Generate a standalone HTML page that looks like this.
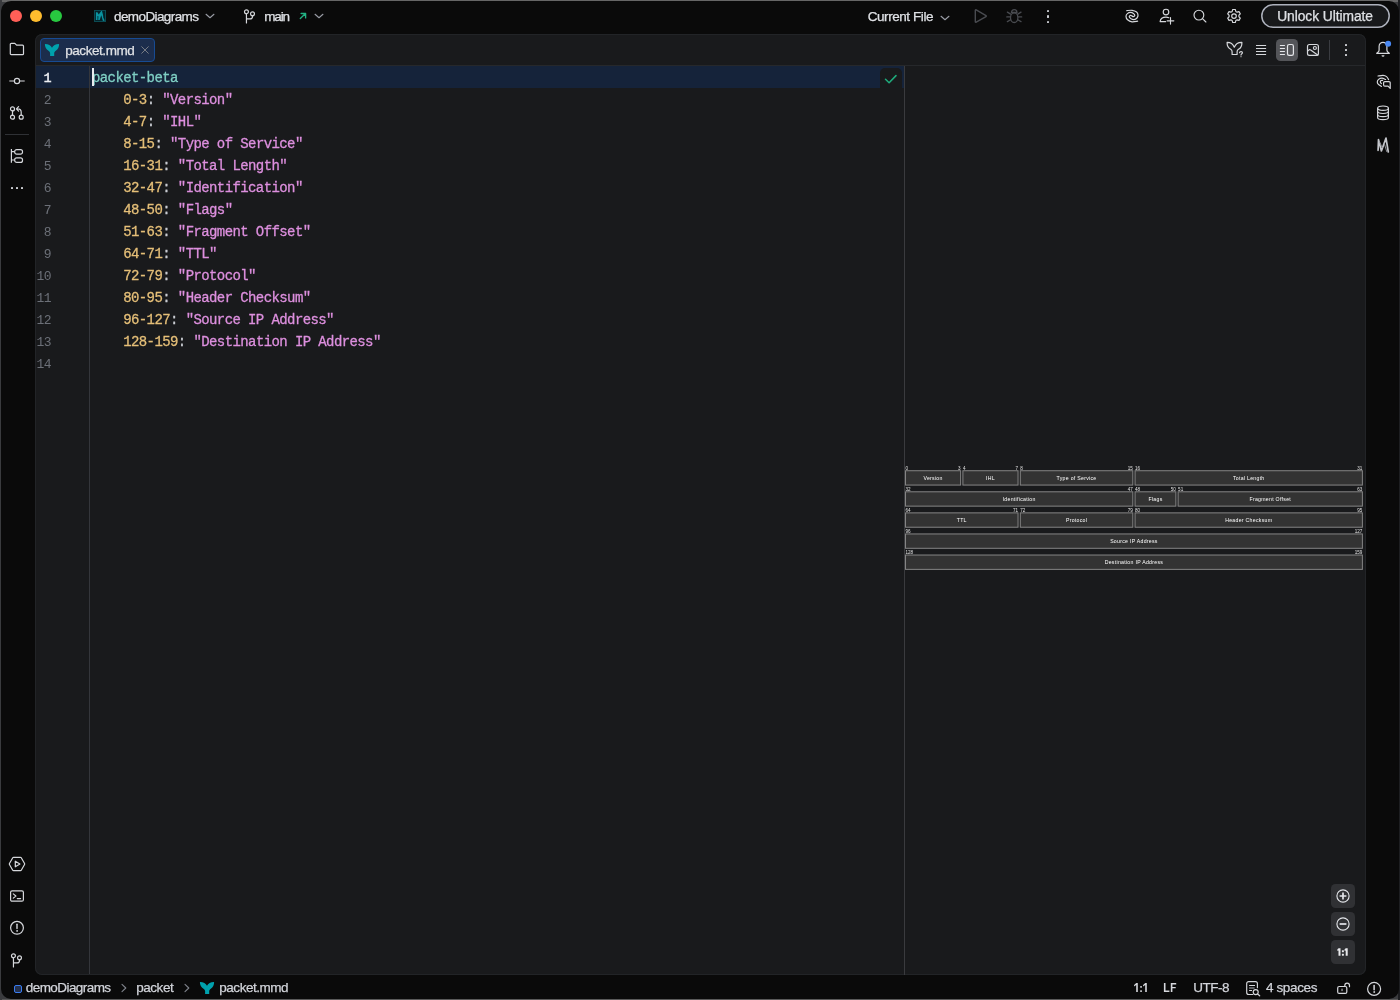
<!DOCTYPE html>
<html>
<head>
<meta charset="utf-8">
<title>packet.mmd</title>
<style>
*{box-sizing:border-box;margin:0;padding:0}
html,body{width:1400px;height:1000px;overflow:hidden;background:#3a3b3e;font-family:"Liberation Sans",sans-serif;}
#win{position:absolute;left:1px;top:1px;width:1398.4px;height:998px;background:#0a0a0a;border-radius:10px;overflow:hidden;}
#pg{will-change:transform;position:absolute;left:-1px;top:-1px;width:1400px;height:1000px;}
.abs{position:absolute}
.t{position:absolute;color:#dfe1e5;white-space:nowrap;font-family:"Liberation Sans",sans-serif;-webkit-text-stroke:0.25px currentColor;}
svg{position:absolute;overflow:visible}
.ic{fill:none;stroke:#d6d8dc;stroke-width:1.2;stroke-linecap:round;stroke-linejoin:round}
.dim{stroke:#54575e}
#island{position:absolute;left:35px;top:34px;width:1331px;height:941px;background:#191a1c;border-radius:7px;box-shadow:inset 0 0 0 1px #222427;}
.code{position:absolute;font-family:"Liberation Mono",monospace;font-size:14px;letter-spacing:-0.6px;line-height:22px;white-space:pre;color:#d5d8de;-webkit-text-stroke:0.3px currentColor;}
.ln{position:absolute;font-family:"Liberation Mono",monospace;font-size:13px;letter-spacing:-0.6px;line-height:22px;color:#6c7078;text-align:right;white-space:pre;}
.k{color:#7fcfc4}.n{color:#e5bf78}.s{color:#dd8fde}.p{color:#c9ccd2}
</style>
</head>
<body>
<div class="abs" style="left:0;top:0;width:1400px;height:1.5px;background:#666"></div><div class="abs" style="left:0;top:998.5px;width:1400px;height:1.5px;background:#5a5a5a"></div><div class="abs" style="left:1398px;top:0;width:2px;height:1000px;background:#1d1e21"></div><div class="abs" style="left:0;top:0;width:1.5px;height:1000px;background:#3a3b3e"></div>
<div id="win"><div id="pg">
<!-- traffic lights -->
<div class="abs" style="left:9.8px;top:9.5px;width:12.4px;height:12.4px;border-radius:50%;background:#ff5f57"></div>
<div class="abs" style="left:29.8px;top:9.5px;width:12.4px;height:12.4px;border-radius:50%;background:#febc2e"></div>
<div class="abs" style="left:49.8px;top:9.5px;width:12.4px;height:12.4px;border-radius:50%;background:#28c840"></div>

<!-- TITLE BAR -->
<svg style="left:94px;top:10px" width="12" height="12" viewBox="0 0 12 12"><rect x="0.5" y="0.5" width="11" height="11" fill="#04232a" stroke="#0b4a52" stroke-width="1"/><path d="M1.900 2.200h1.500l1.300 2.300L7.200 1.100h.8l2.600 9.800-1.800-.1L7.300 5.300 5.700 10H4.200l.2-3.800-.9-.3V10H1.900z" fill="#0a93a0"/><path d="M9.800 1v7.400" stroke="#04232a" stroke-width=".8"/></svg>
<div class="t" style="left:114.00px;top:7.32px;font-size:13.5px;line-height:20px;color:#dfe1e5;font-weight:normal;letter-spacing:-0.595px;">demoDiagrams</div>
<svg style="left:205px;top:11px" width="10" height="10" viewBox="0 0 10 10"><path style="stroke:#9a9da6;stroke-width:1.100" class="ic" d="M1.050 3.250 5 6.750 8.950 3.250"/></svg>
<svg style="left:241px;top:8px" width="16" height="16" viewBox="0 0 16 16"><g class="ic"><circle cx="5.450" cy="3.800" r="1.950"/><circle cx="11.500" cy="5.850" r="1.950"/><path d="M5.450 5.800V15M11.500 7.800v.6a2.500 2.500 0 0 1-2.500 2.500H5.450"/></g></svg>
<div class="t" style="left:264.20px;top:7.32px;font-size:13.5px;line-height:20px;color:#dfe1e5;font-weight:normal;letter-spacing:-1.122px;">main</div>
<svg style="left:298px;top:11px" width="10" height="10" viewBox="0 0 10 10"><path d="M2.300 7.600 7.500 2.600M3.100 2.500H7.600V6.900" fill="none" stroke="#22b183" stroke-width="1.350" stroke-linecap="round" stroke-linejoin="round"/></svg>
<svg style="left:314px;top:11px" width="10" height="10" viewBox="0 0 10 10"><path style="stroke:#9a9da6;stroke-width:1.100" class="ic" d="M1.050 3.250 5 6.750 8.950 3.250"/></svg>

<div class="t" style="left:867.70px;top:7.32px;font-size:13.5px;line-height:20px;color:#dfe1e5;font-weight:normal;letter-spacing:-0.430px;">Current File</div>
<svg style="left:940px;top:12.950px" width="10" height="10" viewBox="0 0 10 10"><path style="stroke:#9a9da6;stroke-width:1.100" class="ic" d="M1.050 3.250 5 6.750 8.950 3.250"/></svg>
<svg style="left:972px;top:8px" width="16" height="16" viewBox="0 0 16 16"><path d="M3.300 2.400v11.300a.6.600 0 0 0 .9.520l9.800-5.650a.6.600 0 0 0 0-1.040l-9.800-5.650a.6.600 0 0 0-.9.520z" fill="none" stroke="#494b50" stroke-width="1.400" stroke-linejoin="round"/></svg>
<svg style="left:1006px;top:8px" width="16" height="16" viewBox="0 0 16 16"><g fill="none" stroke="#494b50" stroke-width="1.300" stroke-linecap="round"><ellipse cx="8.200" cy="9.700" rx="3.700" ry="4.800"/><path d="M5.400 4.500a2.800 2.900 0 0 1 5.600 0z" stroke-linejoin="round"/><path d="M.8 8.900h3.400M12.400 8.900h3.300M1.400 4.100 4.600 6.100M15 4.100 11.800 6.100M1.400 13.600 4.600 11.800M15 13.600 11.800 11.800"/></g></svg>
<div class="abs" style="left:1046.800px;top:9.500px;width:2.500px;height:2.500px;border-radius:35%;background:#ced0d6"></div>
<div class="abs" style="left:1046.800px;top:15.100px;width:2.500px;height:2.500px;border-radius:35%;background:#ced0d6"></div>
<div class="abs" style="left:1046.800px;top:20.700px;width:2.500px;height:2.500px;border-radius:35%;background:#ced0d6"></div>

<!-- swirl -->
<svg style="left:1124px;top:8px" width="16" height="16" viewBox="0 0 16 16"><g style="stroke-width:1.2" class="ic"><path d="M2.80 2.60C3.67 2.55 6.37 2.07 8.00 2.30C9.63 2.53 11.60 3.22 12.60 4.00C13.60 4.78 13.93 6.00 14.00 7.00C14.07 8.00 13.67 9.23 13.00 10.00C12.33 10.77 11.07 11.53 10.00 11.60C8.93 11.67 7.40 10.90 6.60 10.40C5.80 9.90 5.20 9.10 5.20 8.60C5.20 8.10 6.13 7.53 6.60 7.40C7.07 7.27 7.77 7.73 8.00 7.80"/><path d="M13.60 13.20C12.67 13.30 9.67 14.03 8.00 13.80C6.33 13.57 4.60 12.70 3.60 11.80C2.60 10.90 2.03 9.43 2.00 8.40C1.97 7.37 2.63 6.27 3.40 5.60C4.17 4.93 5.60 4.43 6.60 4.40C7.60 4.37 8.70 4.90 9.40 5.40C10.10 5.90 10.80 6.87 10.80 7.40C10.80 7.93 9.83 8.45 9.40 8.60C8.97 8.75 8.40 8.35 8.20 8.30"/></g></svg>
<!-- add user -->
<svg style="left:1158px;top:8px" width="18" height="18" viewBox="0 0 18 18"><g style="stroke-width:1.15" class="ic"><circle cx="8" cy="4" r="2.8"/><path d="M2.100 13.600c.3-2.700 2.700-4.500 5.900-4.500 1 0 2 .2 2.800.6M2.100 13.600h5.600M12.500 9.500v6.600M9.200 12.800h6.600"/></g></svg>
<!-- search -->
<svg style="left:1192px;top:8px" width="16" height="16" viewBox="0 0 16 16"><g style="stroke-width:1.15" class="ic"><circle cx="6.900" cy="7.100" r="4.900"/><path d="M10.500 10.700 13.900 14"/></g></svg>
<!-- gear -->
<svg style="left:1226px;top:8px" width="16" height="16" viewBox="0 0 16 16"><g style="stroke-width:1.15" class="ic"><circle cx="8" cy="8.100" r="2.300"/><path d="M6.700 1.500h2.600l.5 1.900 1.300.75 1.900-.55 1.300 2.250-1.400 1.400v1.500l1.400 1.400-1.300 2.250-1.900-.55-1.300.75-.5 1.900H6.700l-.5-1.900-1.300-.75-1.900.55-1.300-2.250 1.400-1.400v-1.500l-1.400-1.400 1.300-2.250 1.900.55 1.300-.75z" stroke-linejoin="round"/></g></svg>

<svg style="left:1261px;top:4px" width="129" height="24" viewBox="0 0 129 24"><rect x=".8" y=".8" width="127.400" height="22.400" rx="11.200" fill="#18191b" stroke="#adb1bc" stroke-width="1.500"/></svg>
<div class="t" style="left:1277.20px;top:7.02px;font-size:13.8px;line-height:20px;color:#dfe1e5;font-weight:normal;letter-spacing:-0.058px;">Unlock Ultimate</div>

<!-- LEFT BAR -->
<svg style="left:9px;top:41px" width="16" height="16" viewBox="0 0 16 16"><path class="ic" d="M1.300 3.300a1 1 0 0 1 1-1h3.500l1.800 1.900h5.900a1 1 0 0 1 1 1v7.500a1 1 0 0 1-1 1H2.300a1 1 0 0 1-1-1z"/></svg>
<svg style="left:9px;top:73px" width="16" height="16" viewBox="0 0 16 16"><g class="ic"><circle cx="8" cy="8" r="2.600"/><path d="M.3 8h4.800M10.900 8h4.800" stroke-linecap="butt"/></g></svg>
<svg style="left:9px;top:105px" width="16" height="16" viewBox="0 0 16 16"><g class="ic"><circle cx="3.500" cy="3.900" r="2"/><circle cx="3.500" cy="12.200" r="2"/><circle cx="12.200" cy="12.200" r="2"/><path d="M3.500 5.900v4.300M12.200 10.200V7.300a3.400 3.400 0 0 0-3.400-3.400H7.500M9.600 1.700 7.400 3.900l2.200 2.200"/></g></svg>
<div class="abs" style="left:5px;top:134px;width:24px;height:1px;background:#2f3135"></div>
<svg style="left:9px;top:148px" width="16" height="16" viewBox="0 0 16 16"><g class="ic"><path d="M2.400 1v13.800M2.400 3.700h3.200M2.400 12h3.200" stroke-linecap="butt"/><rect x="5.700" y="1.600" width="7.800" height="4.600" rx="2"/><rect x="5.700" y="9.800" width="7.800" height="4.600" rx="2"/></g></svg>
<div class="abs" style="left:10.800px;top:186.800px;width:2.200px;height:2.200px;border-radius:25%;background:#cdcfd4"></div>
<div class="abs" style="left:15.900px;top:186.800px;width:2.200px;height:2.200px;border-radius:25%;background:#cdcfd4"></div>
<div class="abs" style="left:20.900px;top:186.800px;width:2.200px;height:2.200px;border-radius:25%;background:#cdcfd4"></div>

<svg style="left:9px;top:856px" width="16" height="16" viewBox="0 0 16 16"><g class="ic"><path d="M4.600 1.300h6.800a1 1 0 0 1 .85.500l3.300 5.700a1 1 0 0 1 0 1l-3.300 5.700a1 1 0 0 1-.85.500H4.600a1 1 0 0 1-.85-.5L.45 8.500a1 1 0 0 1 0-1l3.300-5.700a1 1 0 0 1 .85-.5z"/><path d="M6.300 5.200v5.600l4.600-2.800z"/></g></svg>
<svg style="left:9px;top:888px" width="16" height="16" viewBox="0 0 16 16"><g class="ic"><rect x="1.600" y="2.800" width="12.800" height="10.400" rx="1.500"/><path d="M4.300 5.900 6.900 8 4.300 10.100M8.300 10.600h3.300"/></g></svg>
<svg style="left:9px;top:920px" width="16" height="16" viewBox="0 0 16 16"><g class="ic"><circle cx="8" cy="7.800" r="6.400"/><path d="M8 4.300v4.300" stroke-width="1.400"/><circle cx="8" cy="10.900" r=".5" fill="#d6d8dc" stroke-width=".7"/></g></svg>
<svg style="left:7.950px;top:952.400px" width="16" height="16" viewBox="0 0 16 16"><g class="ic"><circle cx="5.450" cy="3.800" r="1.950"/><circle cx="11.500" cy="5.850" r="1.950"/><path d="M5.450 5.800V15M11.500 7.800v.6a2.500 2.500 0 0 1-2.500 2.500H5.450"/></g></svg>

<!-- RIGHT BAR -->
<svg style="left:1375px;top:41px" width="16" height="16" viewBox="0 0 16 16"><g class="ic"><path d="M1.700 12.400H14.300C13.400 11.500 11.900 10.600 11.900 9.200V5.400a3.900 4.100 0 0 0-7.800 0V9.200C4.100 10.600 2.600 11.500 1.700 12.400z"/></g><path d="M6.500 14.300h3a1.500 1.500 0 0 1-3 0z" fill="#d6d8dc"/><circle cx="13.100" cy="2.800" r="3" fill="#4a89f3"/></svg>
<svg style="left:1375px;top:74px" width="17" height="16" viewBox="0 0 17 16"><g class="ic"><path d="M3.00 2.00C3.83 1.88 6.57 1.20 8.00 1.30C9.43 1.40 10.67 1.88 11.60 2.60C12.53 3.32 13.27 5.10 13.60 5.60"/><path d="M10.60 5.50C10.00 5.28 8.17 4.22 7.00 4.20C5.83 4.18 4.38 4.77 3.60 5.40C2.82 6.03 2.33 7.17 2.30 8.00C2.27 8.83 2.72 9.67 3.40 10.40C4.08 11.13 5.90 12.07 6.40 12.40"/><path d="M7.60 6.40C7.33 6.43 6.38 6.33 6.00 6.60C5.62 6.87 5.23 7.50 5.30 8.00C5.37 8.50 6.22 9.33 6.40 9.60"/><path d="M9.800 7.600h4.200a1.200 1.200 0 0 1 1.200 1.200v5.600L13 12.200H9.800a1.200 1.200 0 0 1-1.200-1.200V8.800a1.200 1.200 0 0 1 1.200-1.200z"/></g></svg>
<svg style="left:1375px;top:105px" width="16" height="16" viewBox="0 0 16 16"><g style="stroke-width:1.150" class="ic"><ellipse cx="8" cy="3.200" rx="5.400" ry="2.200"/><path d="M2.600 3.200v9.200c0 1.200 2.400 2.200 5.400 2.200s5.400-1 5.400-2.200V3.200"/><path d="M2.600 6.300c0 1.200 2.400 2.200 5.400 2.200s5.400-1 5.400-2.200M2.600 9.400c0 1.200 2.400 2.200 5.400 2.200s5.400-1 5.400-2.200"/></g></svg>
<svg style="left:1375px;top:137px" width="16" height="16" viewBox="0 0 16 16"><g fill="none" stroke-linejoin="round" stroke-linecap="round"><path d="M3.100 13.300 3.500 2.600 6.400 14 11 1.100 13.300 15" stroke="#c4c6cb" stroke-width="1.700"/><path d="M4.900 5.500 7.100 10.500M9.400 6.800 11.700 14.500" stroke="#8e9096" stroke-width="1"/></g></svg>


<div id="island"></div>
<!-- TAB BAR -->
<div class="abs" style="left:36px;top:65px;width:1329px;height:1px;background:#26282b"></div>
<div class="abs" style="left:40px;top:38px;width:115px;height:24px;border:1px solid #174b93;border-radius:4px;background:#1c2d4c"></div>
<svg style="left:44px;top:43px" width="16" height="14" viewBox="0 0 16 14"><path d="M.9 1C4.200.9 6.900 2.500 8 4.850 9.100 2.500 11.800.9 15.100 1c.1 3-1.100 5.300-3.300 6.800-1 .7-1.600 1.500-1.600 2.500v2.600H6.100v-2.600c0-1-.6-1.800-1.600-2.500C2.200 6.300.8 4 .9 1z" fill="#00a1ad"/></svg>
<div class="t" style="left:65.20px;top:41.32px;font-size:13.5px;line-height:20px;color:#dfe1e5;font-weight:normal;letter-spacing:-0.437px;">packet.mmd</div>
<svg style="left:141px;top:46px" width="8" height="8" viewBox="0 0 8 8"><path d="M.7.700 7.300 7.300M7.300.7.700 7.300" stroke="#787c84" stroke-width="1" fill="none" stroke-linecap="round"/></svg>

<!-- editor toolbar (right) -->
<svg style="left:1226px;top:41px" width="18" height="17" viewBox="0 0 18 17"><path class="ic" d="M1.100 1.400C4.200 1.300 6.900 2.900 8.300 6.200 9.700 2.900 12.400 1.300 15.900 1.400c.1 3-1 5.500-3.400 6.900-.9.500-1.400 1.400-1.400 2.400v2.800H6.100V10.700c0-1-.5-1.900-1.400-2.400C2.300 6.900 1 4.400 1.100 1.400z"/><path d="M13.500 11.700c.1-1.500 3-1.500 3 0 0 1.100-1.500 1.100-1.500 2.400M15 15.600v.2" fill="none" stroke="#d6d8dc" stroke-width="1.100" stroke-linecap="round"/></svg>
<svg style="left:1253px;top:42px" width="16" height="16" viewBox="0 0 16 16"><path style="stroke-linecap:butt;stroke-width:1.200" class="ic" d="M3 3.500h10.100M3 6.500h10.100M3 9.500h10.100M3 12.500h10.100"/></svg>
<div class="abs" style="left:1276px;top:39px;width:22px;height:22px;border-radius:4.500px;background:#545559"></div>
<svg style="left:1279px;top:42px" width="16" height="16" viewBox="0 0 16 16"><g style="stroke:#e6e7ea;stroke-width:1.200" class="ic"><path d="M.9 3.500h5M.9 6.500h5M.9 9.500h5M.9 12.500h5" stroke-linecap="butt"/><rect x="8.500" y="2.500" width="5.900" height="10.900" rx="1.700"/></g></svg>
<svg style="left:1305px;top:42px" width="16" height="16" viewBox="0 0 16 16"><g style="stroke-width:1.200" class="ic"><rect x="2.500" y="2.500" width="10.900" height="10.900" rx="1.900"/><circle cx="9.900" cy="6" r="1.500"/><path d="M2.600 9 4.300 7.700a.8.800 0 0 1 1 0L12.700 13.100"/></g></svg>
<div class="abs" style="left:1329px;top:40px;width:1px;height:20px;background:#3a3c41"></div>
<div class="abs" style="left:1344.700px;top:43.500px;width:2.400px;height:2.400px;border-radius:35%;background:#d6d8dc"></div>
<div class="abs" style="left:1344.700px;top:48.700px;width:2.400px;height:2.400px;border-radius:35%;background:#d6d8dc"></div>
<div class="abs" style="left:1344.700px;top:53.800px;width:2.400px;height:2.400px;border-radius:35%;background:#d6d8dc"></div>

<!-- CODE -->
<div class="abs" style="left:36px;top:66px;width:868px;height:22px;background:#15233a"></div>
<div class="abs" style="left:89px;top:66px;width:1px;height:908px;background:#34363b"></div>
<div class="abs" style="left:904px;top:66px;width:1px;height:908.5px;background:#3a3b3e"></div>
<div class="abs" style="left:880px;top:68px;width:22px;height:22px;border-radius:5px 5px 0 0;background:#191a1c"></div>
<svg style="left:884px;top:73px" width="14" height="12" viewBox="0 0 14 12"><path d="M1.500 6.300 5.100 9.700 12 2.600" fill="none" stroke="#1fab7c" stroke-width="1.550" stroke-linecap="round" stroke-linejoin="round"/></svg>
<div class="ln" style="left:29px;top:68px;width:22px"><span style="color:#eceef2;-webkit-text-stroke:0.5px #eceef2">1</span>
2
3
4
5
6
7
8
9
10
11
12
13
14</div>
<div class="code" style="left:92px;top:67px"><span class="k">packet-beta</span>
    <span class="n">0-3</span><span class="p">:</span> <span class="s">&quot;Version&quot;</span>
    <span class="n">4-7</span><span class="p">:</span> <span class="s">&quot;IHL&quot;</span>
    <span class="n">8-15</span><span class="p">:</span> <span class="s">&quot;Type of Service&quot;</span>
    <span class="n">16-31</span><span class="p">:</span> <span class="s">&quot;Total Length&quot;</span>
    <span class="n">32-47</span><span class="p">:</span> <span class="s">&quot;Identification&quot;</span>
    <span class="n">48-50</span><span class="p">:</span> <span class="s">&quot;Flags&quot;</span>
    <span class="n">51-63</span><span class="p">:</span> <span class="s">&quot;Fragment Offset&quot;</span>
    <span class="n">64-71</span><span class="p">:</span> <span class="s">&quot;TTL&quot;</span>
    <span class="n">72-79</span><span class="p">:</span> <span class="s">&quot;Protocol&quot;</span>
    <span class="n">80-95</span><span class="p">:</span> <span class="s">&quot;Header Checksum&quot;</span>
    <span class="n">96-127</span><span class="p">:</span> <span class="s">&quot;Source IP Address&quot;</span>
    <span class="n">128-159</span><span class="p">:</span> <span class="s">&quot;Destination IP Address&quot;</span></div>
<div class="abs" style="left:92px;top:68px;width:2px;height:18px;background:#e9ebef"></div>

<!-- DIAGRAM -->
<svg style="left:905px;top:463.67px" width="460.06" height="112.10" viewBox="0 0 1026 250" font-family="Liberation Sans, sans-serif" font-size="10.2">
<rect x="1.1" y="15" width="123" height="32" fill="#333333" stroke="#858585" stroke-width="2.23"/>
<text x="62.6" y="34.6" text-anchor="middle" fill="#ffffff" font-size="11.6" letter-spacing="0.62">Version</text>
<text x="1.1" y="12.5" text-anchor="start" fill="#e0e0e0">0</text>
<text x="124.1" y="12.5" text-anchor="end" fill="#e0e0e0">3</text>
<rect x="129.1" y="15" width="123" height="32" fill="#333333" stroke="#858585" stroke-width="2.23"/>
<text x="190.6" y="34.6" text-anchor="middle" fill="#ffffff" font-size="11.6" letter-spacing="0.62">IHL</text>
<text x="129.1" y="12.5" text-anchor="start" fill="#e0e0e0">4</text>
<text x="252.1" y="12.5" text-anchor="end" fill="#e0e0e0">7</text>
<rect x="257.1" y="15" width="251" height="32" fill="#333333" stroke="#858585" stroke-width="2.23"/>
<text x="382.6" y="34.6" text-anchor="middle" fill="#ffffff" font-size="11.6" letter-spacing="0.62">Type of Service</text>
<text x="257.1" y="12.5" text-anchor="start" fill="#e0e0e0">8</text>
<text x="508.1" y="12.5" text-anchor="end" fill="#e0e0e0">15</text>
<rect x="513.1" y="15" width="507" height="32" fill="#333333" stroke="#858585" stroke-width="2.23"/>
<text x="766.6" y="34.6" text-anchor="middle" fill="#ffffff" font-size="11.6" letter-spacing="0.62">Total Length</text>
<text x="513.1" y="12.5" text-anchor="start" fill="#e0e0e0">16</text>
<text x="1020.1" y="12.5" text-anchor="end" fill="#e0e0e0">31</text>
<rect x="1.1" y="62" width="507" height="32" fill="#333333" stroke="#858585" stroke-width="2.23"/>
<text x="254.6" y="81.6" text-anchor="middle" fill="#ffffff" font-size="11.6" letter-spacing="0.62">Identification</text>
<text x="1.1" y="59.5" text-anchor="start" fill="#e0e0e0">32</text>
<text x="508.1" y="59.5" text-anchor="end" fill="#e0e0e0">47</text>
<rect x="513.1" y="62" width="91" height="32" fill="#333333" stroke="#858585" stroke-width="2.23"/>
<text x="558.6" y="81.6" text-anchor="middle" fill="#ffffff" font-size="11.6" letter-spacing="0.62">Flags</text>
<text x="513.1" y="59.5" text-anchor="start" fill="#e0e0e0">48</text>
<text x="604.1" y="59.5" text-anchor="end" fill="#e0e0e0">50</text>
<rect x="609.1" y="62" width="411" height="32" fill="#333333" stroke="#858585" stroke-width="2.23"/>
<text x="814.6" y="81.6" text-anchor="middle" fill="#ffffff" font-size="11.6" letter-spacing="0.62">Fragment Offset</text>
<text x="609.1" y="59.5" text-anchor="start" fill="#e0e0e0">51</text>
<text x="1020.1" y="59.5" text-anchor="end" fill="#e0e0e0">63</text>
<rect x="1.1" y="109" width="251" height="32" fill="#333333" stroke="#858585" stroke-width="2.23"/>
<text x="126.6" y="128.6" text-anchor="middle" fill="#ffffff" font-size="11.6" letter-spacing="0.62">TTL</text>
<text x="1.1" y="106.5" text-anchor="start" fill="#e0e0e0">64</text>
<text x="252.1" y="106.5" text-anchor="end" fill="#e0e0e0">71</text>
<rect x="257.1" y="109" width="251" height="32" fill="#333333" stroke="#858585" stroke-width="2.23"/>
<text x="382.6" y="128.6" text-anchor="middle" fill="#ffffff" font-size="11.6" letter-spacing="0.62">Protocol</text>
<text x="257.1" y="106.5" text-anchor="start" fill="#e0e0e0">72</text>
<text x="508.1" y="106.5" text-anchor="end" fill="#e0e0e0">79</text>
<rect x="513.1" y="109" width="507" height="32" fill="#333333" stroke="#858585" stroke-width="2.23"/>
<text x="766.6" y="128.6" text-anchor="middle" fill="#ffffff" font-size="11.6" letter-spacing="0.62">Header Checksum</text>
<text x="513.1" y="106.5" text-anchor="start" fill="#e0e0e0">80</text>
<text x="1020.1" y="106.5" text-anchor="end" fill="#e0e0e0">95</text>
<rect x="1.1" y="156" width="1019" height="32" fill="#333333" stroke="#858585" stroke-width="2.23"/>
<text x="510.6" y="175.6" text-anchor="middle" fill="#ffffff" font-size="11.6" letter-spacing="0.62">Source IP Address</text>
<text x="1.1" y="153.5" text-anchor="start" fill="#e0e0e0">96</text>
<text x="1020.1" y="153.5" text-anchor="end" fill="#e0e0e0">127</text>
<rect x="1.1" y="203" width="1019" height="32" fill="#333333" stroke="#858585" stroke-width="2.23"/>
<text x="510.6" y="222.6" text-anchor="middle" fill="#ffffff" font-size="11.6" letter-spacing="0.62">Destination IP Address</text>
<text x="1.1" y="200.5" text-anchor="start" fill="#e0e0e0">128</text>
<text x="1020.1" y="200.5" text-anchor="end" fill="#e0e0e0">159</text>
</svg>
<div class="abs" style="left:1331px;top:884px;width:24px;height:24px;border-radius:4.5px;background:#303134"></div>
<div class="abs" style="left:1331px;top:912px;width:24px;height:24px;border-radius:4.5px;background:#303134"></div>
<div class="abs" style="left:1331px;top:940px;width:24px;height:24px;border-radius:4.5px;background:#303134"></div>
<svg style="left:1335px;top:888px" width="16" height="16" viewBox="0 0 16 16"><circle cx="8" cy="8" r="6.1" fill="none" stroke="#e4e6ea" stroke-width="1.1"/><path d="M4.600 8h6.800M8 4.600v6.800" stroke="#e4e6ea" stroke-width="1.700" fill="none"/></svg>
<svg style="left:1335px;top:916px" width="16" height="16" viewBox="0 0 16 16"><circle cx="8" cy="8" r="6.1" fill="none" stroke="#e4e6ea" stroke-width="1.1"/><path d="M4.600 8h6.800" stroke="#e4e6ea" stroke-width="1.700" fill="none"/></svg>
<svg style="left:1331px;top:940px" width="24" height="24" viewBox="0 0 24 24"><g fill="#e8e9ec"><path d="M7.600 8.200h1.900v7.600H7.500V10.400L6.400 11 6.400 9.300z"/><path d="M14.800 8.200h1.900v7.600h-2V10.400L13.600 11V9.300z"/><rect x="10.900" y="10.200" width="2" height="2" rx=".4"/><rect x="10.900" y="13.700" width="2" height="2" rx=".4"/></g></svg>

<!-- STATUS BAR -->
<div class="abs" style="left:14px;top:985px;width:8.2px;height:8.2px;border:1.3px solid #3a7cf0;border-radius:2px;background:#25324f"></div>
<div class="t" style="left:25.80px;top:977.92px;font-size:13.5px;line-height:20px;color:#d2d4da;font-weight:normal;letter-spacing:-0.568px;">demoDiagrams</div>
<svg style="left:119.600px;top:983.100px" width="8" height="10" viewBox="0 0 8 10"><path d="M2 1.400 5.800 5 2 8.600" fill="none" stroke="#7f838b" stroke-width="1.100" stroke-linecap="round" stroke-linejoin="round"/></svg>
<div class="t" style="left:136.20px;top:977.92px;font-size:13.5px;line-height:20px;color:#d2d4da;font-weight:normal;letter-spacing:-0.456px;">packet</div>
<svg style="left:182.700px;top:983.100px" width="8" height="10" viewBox="0 0 8 10"><path d="M2 1.400 5.800 5 2 8.600" fill="none" stroke="#7f838b" stroke-width="1.100" stroke-linecap="round" stroke-linejoin="round"/></svg>
<svg style="left:199px;top:981px" width="16" height="14" viewBox="0 0 16 14"><path d="M.9 1C4.200.9 6.900 2.500 8 4.850 9.100 2.500 11.800.9 15.100 1c.1 3-1.100 5.300-3.300 6.800-1 .7-1.600 1.500-1.600 2.500v2.600H6.100v-2.600c0-1-.6-1.800-1.600-2.500C2.200 6.300.8 4 .9 1z" fill="#00a1ad"/></svg>
<div class="t" style="left:219.30px;top:977.92px;font-size:13.5px;line-height:20px;color:#d2d4da;font-weight:normal;letter-spacing:-0.470px;">packet.mmd</div>
<svg style="left:1130px;top:980px" width="56" height="16" viewBox="0 0 56 16"><g fill="#d6d8dd"><path d="M6.25 3h1.550v9h-1.600V5.100l-2.100 1.350V4.900z"/><path d="M15.25 3h1.550v9h-1.600V5.100l-2.100 1.350V4.900z"/><rect x="10.250" y="6" width="1.600" height="1.700" rx=".3"/><rect x="10.250" y="10.300" width="1.600" height="1.700" rx=".3"/><path d="M33.900 3h1.600v7.600h3.900V12h-5.500z"/><path d="M40.800 3h5.400v1.400h-3.800v2.500h3.300v1.400h-3.300V12h-1.600z"/></g></svg>
<div class="t" style="left:1193.20px;top:977.92px;font-size:13.5px;line-height:20px;color:#d2d4da;font-weight:normal;letter-spacing:-0.512px;">UTF-8</div>
<svg style="left:1245px;top:980px" width="16" height="16" viewBox="0 0 16 16"><g style="stroke-width:1.150" class="ic"><path d="M12.400 7.700V3.600a2 2 0 0 0-2-2H3.700a2 2 0 0 0-2 2v8.900a2 2 0 0 0 2 2h4.100"/><path d="M4.100 5.500h5.900M4.100 10.500h2.900" stroke-linecap="butt"/><path d="M4.100 8h5.500" stroke="#85878c" stroke-linecap="butt" stroke-width="1.400"/><circle cx="10.700" cy="12.100" r="2.500"/><path d="M12.600 14 14.700 15.800"/></g></svg>
<div class="t" style="left:1266.00px;top:977.92px;font-size:13.5px;line-height:20px;color:#d2d4da;font-weight:normal;letter-spacing:-0.378px;">4 spaces</div>
<svg style="left:1336px;top:981px" width="16" height="16" viewBox="0 0 16 16"><g style="stroke-width:1.200" class="ic"><rect x="1.700" y="5.500" width="9.100" height="6.900" rx="1.500"/><path d="M8.800 5.500V4.400a2.350 2.350 0 0 1 4.700 0v1.300"/></g><rect x="5.300" y="7.700" width="1.500" height="2.400" fill="#8a8c90"/></svg>
<svg style="left:1366px;top:981px" width="16" height="16" viewBox="0 0 16 16"><g class="ic"><circle cx="8.100" cy="7.900" r="6.500"/><path d="M8.100 4.500v4.200" stroke-width="1.500"/><circle cx="8.100" cy="11" r=".5" fill="#ced0d6" stroke-width=".8"/></g></svg>


</div></div>
</body>
</html>
